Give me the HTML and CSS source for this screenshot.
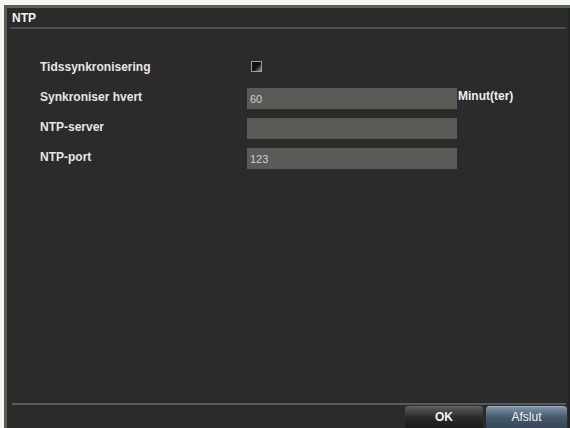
FILE: index.html
```html
<!DOCTYPE html>
<html>
<head>
<meta charset="utf-8">
<link rel="stylesheet" href="styles.css">
</head>
<body>
<div class="dialog">
  <div class="title">NTP</div>
  <div class="rule rule-top"></div>
  <div class="form">
    <div class="row">
      <div class="label">Tidssynkronisering</div>
      <div class="field"><span class="checkbox"></span></div>
    </div>
    <div class="row">
      <div class="label">Synkroniser hvert</div>
      <div class="field"><div class="input">60</div><span class="unit">Minut(ter)</span></div>
    </div>
    <div class="row">
      <div class="label">NTP-server</div>
      <div class="field"><div class="input"></div></div>
    </div>
    <div class="row">
      <div class="label">NTP-port</div>
      <div class="field"><div class="input">123</div></div>
    </div>
  </div>
  <div class="spacer"></div>
  <div class="rule rule-bottom"></div>
  <div class="buttons">
    <div class="btn btn-ok">OK</div>
    <div class="btn btn-exit">Afslut</div>
  </div>
</div>
</body>
</html>
```
FILE: styles.css
```css
html, body {
  margin: 0;
  padding: 0;
  background: #f4f6f4;
  width: 570px;
  height: 428px;
  overflow: hidden;
  font-family: "Liberation Sans", Arial, sans-serif;
}
.dialog {
  margin: 5px 0 0 4px;
  height: 432px;
  border-left: 3px solid #56624f;
  border-top: 3px solid #56624f;
  background: #2b2b2b;
  display: flex;
  flex-direction: column;
  box-shadow: inset -7px 0 0 -5px #232323;
}
.title {
  color: #f2f2f2;
  font-weight: bold;
  font-size: 12px;
  line-height: 14px;
  padding: 3px 0 0 5px;
  height: 16px;
}
.rule {
  height: 2px;
  background: #4e4e4e;
}
.rule-top {
  margin: 0 4px 0 3px;
}
.form {
  padding: 24px 0 0 33px;
  display: flex;
  flex-direction: column;
}
.row {
  display: flex;
  align-items: center;
  height: 30px;
}
.label {
  width: 207px;
  color: #e6e6e6;
  font-size: 12px;
  font-weight: bold;
  margin-top: -3px;
}
.field {
  display: flex;
  align-items: center;
}
.checkbox {
  display: block;
  width: 9px;
  height: 9px;
  margin: -3px 0 0 4px;
  border: 1px solid #a0a0a0;
  background: linear-gradient(135deg, #111 55%, #9a9a9a 100%);
}
.input {
  width: 207px;
  height: 21px;
  padding-left: 3px;
  background: #595b57;
  color: #d0d0d0;
  font-size: 11px;
  line-height: 23px;
}
.unit {
  color: #eeeeee;
  font-size: 12px;
  font-weight: bold;
  margin: -4px 0 0 1px;
}
.spacer {
  flex: 1;
}
.rule-bottom {
  margin: 0 4px 0 5px;
  height: 2px;
  background: #5a5a5a;
  flex: none;
}
.buttons {
  display: flex;
  justify-content: flex-end;
  gap: 3px;
  padding: 1px 0 0 0;
  margin-right: 3px;
  height: 34px;
  flex: none;
}
.btn {
  height: 30px;
  color: #f4f4f4;
  font-size: 12px;
  font-weight: bold;
  text-align: center;
  line-height: 21px;
  border-radius: 4px 4px 0 0;
}
.btn-ok {
  width: 78px;
  background: linear-gradient(#5a5a5a 0%, #2a2a2a 35%, #0e0e0e 100%);
  border-top: 1px solid #6a6a6a;
}
.btn-exit {
  width: 81px;
  background: linear-gradient(#7f93a6 0%, #45596c 35%, #263544 100%);
  border-top: 1px solid #9fb0c0;
  font-weight: normal;
}
```
